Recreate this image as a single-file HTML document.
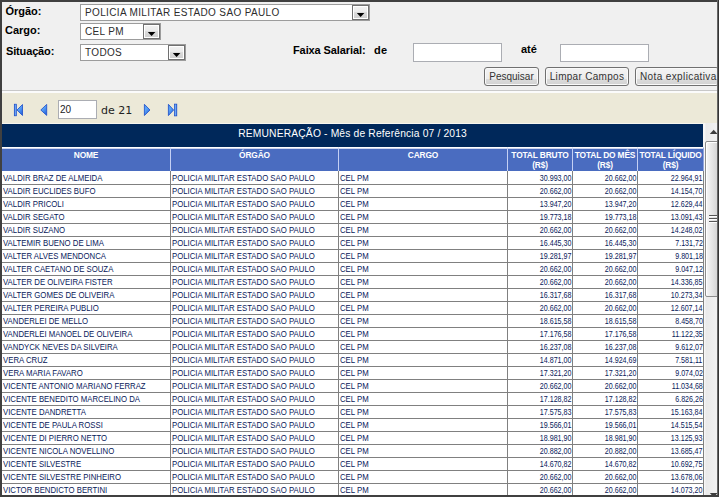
<!DOCTYPE html>
<html lang="pt-BR">
<head>
<meta charset="utf-8">
<title>Remuneração</title>
<style>
html,body{margin:0;padding:0;}
body{width:719px;height:497px;overflow:hidden;position:relative;background:#ece9d8;font-family:"Liberation Sans",sans-serif;}
.abs{position:absolute;}
#frameT{left:0;top:0;width:719px;height:2px;background:#404040;}
#frameL{left:0;top:0;width:2px;height:497px;background:#404040;}
#frameR{left:717px;top:0;width:2px;height:497px;background:linear-gradient(90deg,#666 0,#666 1px,#353535 1px);}
#frameB{left:0;top:495px;width:719px;height:2px;background:#404040;}
#panel{left:2px;top:2px;width:715px;height:88px;background:#f0f0f0;border-bottom:1px solid #c8c8c8;box-shadow:0 2px 0 #fbfbfb;}
.lbl{font-family:"Liberation Sans",sans-serif;font-weight:bold;font-size:11px;color:#000;line-height:13px;white-space:nowrap;}
.sel{background:#fff;border:1px solid #9c9c9c;box-sizing:border-box;height:17px;font-size:10px;letter-spacing:0.35px;line-height:16px;color:#2c2c2c;padding-left:4px;white-space:nowrap;}
.sel .btn{position:absolute;right:0;top:0;width:17px;height:15px;box-sizing:border-box;border:1px solid #707070;box-shadow:inset 0 0 0 1px #fff;background:linear-gradient(#f2f2f2 0,#eaeaea 48%,#dcdcdc 48%,#cecece 100%);}
.sel .btn:after{content:"";position:absolute;left:3.6px;top:6.8px;width:8px;height:4.3px;background:#000;clip-path:polygon(0 0,100% 0,50% 100%);}
.inp{background:#fff;border:1px solid #abadb3;box-sizing:border-box;}
.button{box-sizing:border-box;height:19px;border:1px solid #707070;border-radius:3px;box-shadow:inset 0 0 0 1px #fafafa;background:linear-gradient(#f3f3f3 0,#ececec 62%,#dcdcdc 62%,#d2d2d2 100%);font-size:10px;line-height:17px;color:#333;text-align:center;white-space:nowrap;}
#tbl{left:2px;top:124px;width:702px;border-collapse:separate;border-spacing:0;table-layout:fixed;font-size:8.2px;color:#08205a;}
#tbl td,#tbl th{padding:0 1px 0 1px;white-space:nowrap;overflow:hidden;box-sizing:border-box;}
#tbl td{background:#fff;height:13px;line-height:11px;border-right:1px solid #808080;border-bottom:1px solid #808080;padding-top:1px;}
#tbl tr.first td{height:14px;padding-top:2px;}
#tbl td.r{text-align:right;padding-right:0.7px;}
#tbl td span{display:inline-block;transform:scaleX(0.951);transform-origin:0 50%;}
#tbl td.r span{transform:scaleX(0.868);transform-origin:100% 50%;}
#tbl th{background:#4a6cc0;color:#fff;font-size:8.4px;letter-spacing:-0.15px;font-weight:bold;line-height:10.5px;height:24px;vertical-align:top;border-top:1px solid #fff;border-right:1px solid #c4d0f4;padding-top:1.5px;box-shadow:inset 0 1px 0 #cdd6f0;}
#tbl th.last{border-right-color:#90a4dc;}
#tbl th.title{letter-spacing:0;background:#00285a;border-right:1px solid #f6f6f6 !important;font-size:10.3px;letter-spacing:0.15px !important;font-weight:normal;height:23px;line-height:19px;border:0;padding:0 0 4px 0;vertical-align:top;box-shadow:none;}
</style>
</head>
<body>
<div id="panel" class="abs"></div>

<div class="abs lbl" style="left:5.4px;top:5px;">Órgão:</div>
<div class="abs lbl" style="left:5px;top:24px;">Cargo:</div>
<div class="abs lbl" style="left:6px;top:45px;letter-spacing:-0.15px;">Situação:</div>
<div class="abs lbl" style="left:293px;top:44px;letter-spacing:-0.1px;">Faixa Salarial:</div>
<div class="abs lbl" style="left:374px;top:44px;letter-spacing:0.4px;">de</div>
<div class="abs lbl" style="left:521px;top:43px;">até</div>

<div class="abs sel" style="left:80px;top:4px;width:290px;">POLICIA MILITAR ESTADO SAO PAULO<span class="btn"></span></div>
<div class="abs sel" style="left:80px;top:23px;width:81px;">CEL PM<span class="btn"></span></div>
<div class="abs sel" style="left:80px;top:44px;width:106px;">TODOS<span class="btn"></span></div>

<div class="abs inp" style="left:413px;top:43px;width:89px;height:19px;"></div>
<div class="abs inp" style="left:560px;top:44px;width:89px;height:18px;"></div>

<div class="abs button" style="left:484px;top:67px;width:55px;">Pesquisar</div>
<div class="abs button" style="left:545px;top:67px;width:84px;letter-spacing:0.3px;">Limpar Campos</div>
<div class="abs button" style="left:635px;top:67px;width:84px;text-align:left;padding-left:4px;letter-spacing:0.38px;">Nota explicativa</div>

<!-- pager -->
<svg class="abs" style="left:0;top:98px;" width="200" height="24" viewBox="0 98 200 24">
  <defs>
    <linearGradient id="gb" x1="0" y1="0" x2="0.6" y2="1"><stop offset="0" stop-color="#4f94f2"/><stop offset="0.45" stop-color="#5aa4f8"/><stop offset="1" stop-color="#2a68e0"/></linearGradient>
    <linearGradient id="gv" x1="0" y1="0" x2="1" y2="0"><stop offset="0" stop-color="#2a62dc"/><stop offset="0.5" stop-color="#7ab8fb"/><stop offset="1" stop-color="#2a62dc"/></linearGradient>
  </defs>
  <g fill="url(#gb)" stroke="#1a4cc8" stroke-width="0.8" stroke-linejoin="round">
    <path d="M22.5 104.5 L22.5 115.5 L17 110 Z"/>
    <path d="M46.7 104.4 L46.7 115.4 L40.8 110 Z"/>
    <path d="M144.4 104.3 L144.4 115.5 L150 110 Z"/>
    <path d="M168.4 104.3 L168.4 115.6 L173.6 110 Z"/>
  </g>
  <g fill="url(#gv)" stroke="#1a4cc8" stroke-width="0.7">
    <rect x="14.3" y="104.2" width="2" height="11.6"/>
    <rect x="174.6" y="104.1" width="2.2" height="11.8"/>
  </g>
</svg>
<div class="abs" style="left:2px;top:123px;width:702px;height:1px;background:#f7f6ef;"></div>
<div class="abs inp" style="left:58px;top:100px;width:39px;height:19px;font-size:10px;line-height:17px;padding-left:1px;color:#222;">20</div>
<div class="abs" style="left:101px;top:104px;font-family:'DejaVu Sans',sans-serif;font-size:11px;line-height:13px;color:#222;">de 21</div>

<table id="tbl" class="abs" cellspacing="0">
<colgroup><col style="width:169px"><col style="width:168px"><col style="width:169px"><col style="width:65px"><col style="width:65px"><col style="width:66px"></colgroup>
<tr><th class="title" colspan="6">REMUNERAÇÃO - Mês de Referência 07 / 2013</th></tr>
<tr><th>NOME</th><th>ÓRGÃO</th><th>CARGO</th><th>TOTAL BRUTO<br>(R$)</th><th>TOTAL DO MÊS<br>(R$)</th><th class="last">TOTAL LÍQUIDO<br>(R$)</th></tr>
<tr class=first><td><span>VALDIR BRAZ DE ALMEIDA</span></td><td><span>POLICIA MILITAR ESTADO SAO PAULO</span></td><td><span>CEL PM</span></td><td class="r"><span>30.993,00</span></td><td class="r"><span>20.662,00</span></td><td class="r"><span>22.964,91</span></td></tr>
<tr><td><span>VALDIR EUCLIDES BUFO</span></td><td><span>POLICIA MILITAR ESTADO SAO PAULO</span></td><td><span>CEL PM</span></td><td class="r"><span>20.662,00</span></td><td class="r"><span>20.662,00</span></td><td class="r"><span>14.154,70</span></td></tr>
<tr><td><span>VALDIR PRICOLI</span></td><td><span>POLICIA MILITAR ESTADO SAO PAULO</span></td><td><span>CEL PM</span></td><td class="r"><span>13.947,20</span></td><td class="r"><span>13.947,20</span></td><td class="r"><span>12.629,44</span></td></tr>
<tr><td><span>VALDIR SEGATO</span></td><td><span>POLICIA MILITAR ESTADO SAO PAULO</span></td><td><span>CEL PM</span></td><td class="r"><span>19.773,18</span></td><td class="r"><span>19.773,18</span></td><td class="r"><span>13.091,43</span></td></tr>
<tr><td><span>VALDIR SUZANO</span></td><td><span>POLICIA MILITAR ESTADO SAO PAULO</span></td><td><span>CEL PM</span></td><td class="r"><span>20.662,00</span></td><td class="r"><span>20.662,00</span></td><td class="r"><span>14.248,02</span></td></tr>
<tr><td><span>VALTEMIR BUENO DE LIMA</span></td><td><span>POLICIA MILITAR ESTADO SAO PAULO</span></td><td><span>CEL PM</span></td><td class="r"><span>16.445,30</span></td><td class="r"><span>16.445,30</span></td><td class="r"><span>7.131,72</span></td></tr>
<tr><td><span>VALTER ALVES MENDONCA</span></td><td><span>POLICIA MILITAR ESTADO SAO PAULO</span></td><td><span>CEL PM</span></td><td class="r"><span>19.281,97</span></td><td class="r"><span>19.281,97</span></td><td class="r"><span>9.801,18</span></td></tr>
<tr><td><span>VALTER CAETANO DE SOUZA</span></td><td><span>POLICIA MILITAR ESTADO SAO PAULO</span></td><td><span>CEL PM</span></td><td class="r"><span>20.662,00</span></td><td class="r"><span>20.662,00</span></td><td class="r"><span>9.047,12</span></td></tr>
<tr><td><span>VALTER DE OLIVEIRA FISTER</span></td><td><span>POLICIA MILITAR ESTADO SAO PAULO</span></td><td><span>CEL PM</span></td><td class="r"><span>20.662,00</span></td><td class="r"><span>20.662,00</span></td><td class="r"><span>14.336,85</span></td></tr>
<tr><td><span>VALTER GOMES DE OLIVEIRA</span></td><td><span>POLICIA MILITAR ESTADO SAO PAULO</span></td><td><span>CEL PM</span></td><td class="r"><span>16.317,68</span></td><td class="r"><span>16.317,68</span></td><td class="r"><span>10.273,34</span></td></tr>
<tr><td><span>VALTER PEREIRA PUBLIO</span></td><td><span>POLICIA MILITAR ESTADO SAO PAULO</span></td><td><span>CEL PM</span></td><td class="r"><span>20.662,00</span></td><td class="r"><span>20.662,00</span></td><td class="r"><span>12.607,14</span></td></tr>
<tr><td><span>VANDERLEI DE MELLO</span></td><td><span>POLICIA MILITAR ESTADO SAO PAULO</span></td><td><span>CEL PM</span></td><td class="r"><span>18.615,58</span></td><td class="r"><span>18.615,58</span></td><td class="r"><span>8.458,70</span></td></tr>
<tr><td><span>VANDERLEI MANOEL DE OLIVEIRA</span></td><td><span>POLICIA MILITAR ESTADO SAO PAULO</span></td><td><span>CEL PM</span></td><td class="r"><span>17.176,58</span></td><td class="r"><span>17.176,58</span></td><td class="r"><span>11.122,35</span></td></tr>
<tr><td><span>VANDYCK NEVES DA SILVEIRA</span></td><td><span>POLICIA MILITAR ESTADO SAO PAULO</span></td><td><span>CEL PM</span></td><td class="r"><span>16.237,08</span></td><td class="r"><span>16.237,08</span></td><td class="r"><span>9.612,07</span></td></tr>
<tr><td><span>VERA CRUZ</span></td><td><span>POLICIA MILITAR ESTADO SAO PAULO</span></td><td><span>CEL PM</span></td><td class="r"><span>14.871,00</span></td><td class="r"><span>14.924,69</span></td><td class="r"><span>7.581,11</span></td></tr>
<tr><td><span>VERA MARIA FAVARO</span></td><td><span>POLICIA MILITAR ESTADO SAO PAULO</span></td><td><span>CEL PM</span></td><td class="r"><span>17.321,20</span></td><td class="r"><span>17.321,20</span></td><td class="r"><span>9.074,02</span></td></tr>
<tr><td><span>VICENTE ANTONIO MARIANO FERRAZ</span></td><td><span>POLICIA MILITAR ESTADO SAO PAULO</span></td><td><span>CEL PM</span></td><td class="r"><span>20.662,00</span></td><td class="r"><span>20.662,00</span></td><td class="r"><span>11.034,68</span></td></tr>
<tr><td><span>VICENTE BENEDITO MARCELINO DA</span></td><td><span>POLICIA MILITAR ESTADO SAO PAULO</span></td><td><span>CEL PM</span></td><td class="r"><span>17.128,82</span></td><td class="r"><span>17.128,82</span></td><td class="r"><span>6.826,26</span></td></tr>
<tr><td><span>VICENTE DANDRETTA</span></td><td><span>POLICIA MILITAR ESTADO SAO PAULO</span></td><td><span>CEL PM</span></td><td class="r"><span>17.575,83</span></td><td class="r"><span>17.575,83</span></td><td class="r"><span>15.163,84</span></td></tr>
<tr><td><span>VICENTE DE PAULA ROSSI</span></td><td><span>POLICIA MILITAR ESTADO SAO PAULO</span></td><td><span>CEL PM</span></td><td class="r"><span>19.566,01</span></td><td class="r"><span>19.566,01</span></td><td class="r"><span>14.515,54</span></td></tr>
<tr><td><span>VICENTE DI PIERRO NETTO</span></td><td><span>POLICIA MILITAR ESTADO SAO PAULO</span></td><td><span>CEL PM</span></td><td class="r"><span>18.981,90</span></td><td class="r"><span>18.981,90</span></td><td class="r"><span>13.125,93</span></td></tr>
<tr><td><span>VICENTE NICOLA NOVELLINO</span></td><td><span>POLICIA MILITAR ESTADO SAO PAULO</span></td><td><span>CEL PM</span></td><td class="r"><span>20.882,00</span></td><td class="r"><span>20.882,00</span></td><td class="r"><span>13.685,47</span></td></tr>
<tr><td><span>VICENTE SILVESTRE</span></td><td><span>POLICIA MILITAR ESTADO SAO PAULO</span></td><td><span>CEL PM</span></td><td class="r"><span>14.670,82</span></td><td class="r"><span>14.670,82</span></td><td class="r"><span>10.692,75</span></td></tr>
<tr><td><span>VICENTE SILVESTRE PINHEIRO</span></td><td><span>POLICIA MILITAR ESTADO SAO PAULO</span></td><td><span>CEL PM</span></td><td class="r"><span>20.662,00</span></td><td class="r"><span>20.662,00</span></td><td class="r"><span>13.678,06</span></td></tr>
<tr><td><span>VICTOR BENDICTO BERTINI</span></td><td><span>POLICIA MILITAR ESTADO SAO PAULO</span></td><td><span>CEL PM</span></td><td class="r"><span>20.662,00</span></td><td class="r"><span>20.662,00</span></td><td class="r"><span>14.073,20</span></td></tr>
</table>

<!-- scrollbar -->
<div class="abs" style="left:704px;top:123px;width:15px;height:374px;background:linear-gradient(90deg,#fbfbfb 0,#eaeaea 2px,#f2f2f2 100%);"></div>
<div class="abs" style="left:705px;top:141px;width:17px;height:156px;box-sizing:border-box;border:1px solid #8c8c8c;border-radius:2px;box-shadow:inset 1px 1px 0 #ffffff;background:linear-gradient(90deg,#f7f7f7 0,#e4e4e4 45%,#c9c9c9 100%);"></div>
<svg class="abs" style="left:704px;top:123px;" width="15" height="374" viewBox="704 123 15 374">
  <path d="M709.8 134 L713.7 129.8 L717.6 134 Z" fill="#3c3c3c"/>
  <path d="M709.8 493 L713.7 497.2 L717.6 493 Z" fill="#3c3c3c"/>
  <g stroke="#555" stroke-width="1"><path d="M709 215.5 H717 M709 218.5 H717 M709 221.5 H717"/></g>
  <g stroke="#fdfdfd" stroke-width="1"><path d="M709 216.5 H717 M709 219.5 H717 M709 222.5 H717"/></g>
</svg>

<div id="frameT" class="abs"></div>
<div id="frameL" class="abs"></div>
<div id="frameR" class="abs"></div>
<div id="frameB" class="abs"></div>
</body>
</html>
